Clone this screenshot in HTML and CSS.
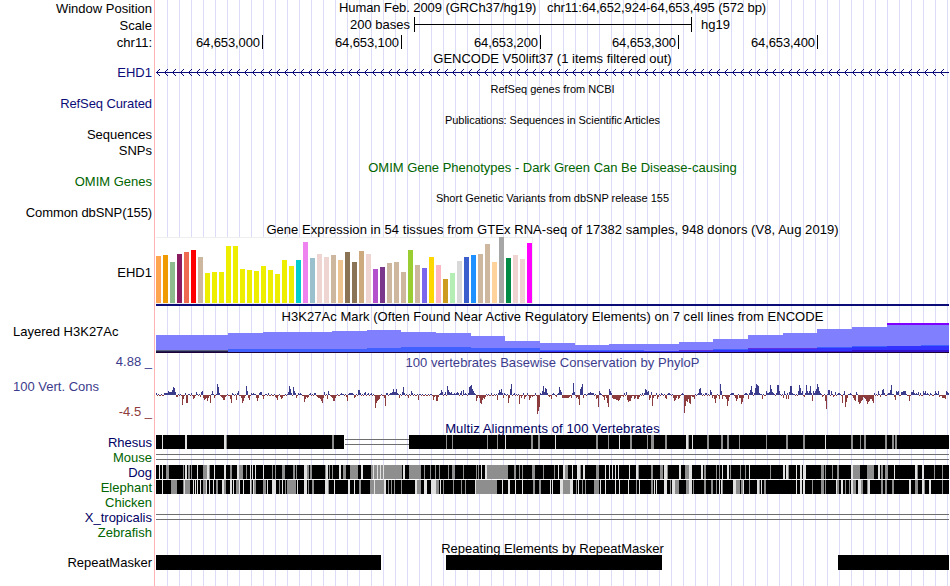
FILE: index.html
```
<!DOCTYPE html>
<html lang="en">
<head>
  <meta charset="UTF-8" />
  <title>chr11:64,652,924-64,653,495</title>
  <link rel="stylesheet" href="styles.css">
</head>
<body>
  <div class="browser">
    <div class="labels">
      <div class="label h17">Window Position</div>
      <div class="label h17">Scale</div>
      <div class="label h30">chr11:</div>
      <div class="label blue h31">EHD1</div>
      <div class="label blue tight h31">RefSeq Curated</div>
      <div class="label h16">Sequences</div>
      <div class="label h31">SNPs</div>
      <div class="label green h31">OMIM Genes</div>
      <div class="label tight dbsnp">Common dbSNP(155)</div>
      <div class="label gtex-label">EHD1</div>
      <div class="label left h3k-label">Layered H3K27Ac</div>
      <div class="label cons h25">4.88 _</div>
      <div class="label cons left h25">100 Vert. Cons</div>
      <div class="label neg h31">-4.5 _</div>
      <div class="label navy">Rhesus</div>
      <div class="label green">Mouse</div>
      <div class="label navy">Dog</div>
      <div class="label green">Elephant</div>
      <div class="label green">Chicken</div>
      <div class="label navy">X_tropicalis</div>
      <div class="label green h30">Zebrafish</div>
      <div class="label">RepeatMasker</div>
    </div>

    <div class="tracks">
      <div class="title position">Human Feb. 2009 (GRCh37/hg19) &nbsp; chr11:64,652,924-64,653,495 (572 bp)</div>
      <div class="scale">
        <span class="scale-text">200 bases</span>
        <span class="scale-bar"></span>
        <span>hg19</span>
      </div>
      <div class="ruler">
        <span class="first">64,653,000</span>
        <span>64,653,100</span>
        <span>64,653,200</span>
        <span class="short">64,653,300</span>
        <span>64,653,400</span>
      </div>
      <div class="title gencode">GENCODE V50lift37 (1 items filtered out)</div>
      <svg class="gene" id="gene" width="793" height="17"></svg>
      <div class="title small refseq">RefSeq genes from NCBI</div>
      <div class="title small pubs">Publications: Sequences in Scientific Articles</div>
      <div class="title green omim">OMIM Gene Phenotypes - Dark Green Can Be Disease-causing</div>
      <div class="title small dbsnp-title">Short Genetic Variants from dbSNP release 155</div>
      <div class="title gtex-title">Gene Expression in 54 tissues from GTEx RNA-seq of 17382 samples, 948 donors (V8, Aug 2019)</div>
      <div class="gtex">
        <div class="gtex-bars" id="gtex"></div>
      </div>
      <div class="title h3k-title">H3K27Ac Mark (Often Found Near Active Regulatory Elements) on 7 cell lines from ENCODE</div>
      <svg id="h3k" width="793" height="30"></svg>
      <div class="title cons cons-title">100 vertebrates Basewise Conservation by PhyloP</div>
      <svg id="phylop" width="793" height="51"></svg>
      <div class="title navy multiz-title">Multiz Alignments of 100 Vertebrates</div>
      <svg id="multiz" width="793" height="105"></svg>
      <div class="title rmsk-title">Repeating Elements by RepeatMasker</div>
      <div class="rmsk">
        <span class="rep-a"></span>
        <span class="rep-b"></span>
        <span class="rep-c"></span>
      </div>
    </div>
  </div>
  <script src="script.js"></script>
</body>
</html>
```
FILE: styles.css
```
body {
  margin: 0;
  background: #fff;
  font-family: "Liberation Sans", Arial, Helvetica, sans-serif;
  font-size: 13px;
  line-height: 15px;
  color: #000;
  overflow: hidden;
}

.browser {
  display: flex;
  width: 949px;
  height: 586px;
}

.labels {
  width: 152px;
  padding: 1px 2px 0 0;
  border-right: 1px solid #ffb4b4;
  box-sizing: content-box;
  flex: none;
}

.label {
  height: 15px;
  text-align: right;
  white-space: nowrap;
}

.label.left {
  text-align: left;
  padding-left: 13px;
}

.label.tight { letter-spacing: -0.1px; }

.label.h16 { height: 16px; }
.label.h17 { height: 17px; }
.label.h25 { height: 25px; }
.label.h30 { height: 30px; }
.label.h31 { height: 31px; }
.label.dbsnp { height: 60px; }
.label.gtex-label { height: 59px; }
.label.h3k-label { height: 30px; }

.blue { color: #0c0c78; }
.navy { color: #000064; }
.green { color: #006400; }
.cons { color: #3c3c8c; }
.neg { color: #8c3c3c; }

.tracks {
  width: 793px;
  margin-left: 1px;
  flex: none;
  background: repeating-linear-gradient(to right, transparent 0 11px, #dcdcf8 11px 12px);
}

.tracks svg {
  display: block;
  shape-rendering: crispEdges;
}

.title {
  text-align: center;
  white-space: nowrap;
}

.small { font-size: 11px; }

.position {
  height: 17px;
  letter-spacing: -0.07px;
}

.scale {
  display: flex;
  height: 18px;
}

.scale-text {
  width: 254px;
  margin-right: 4px;
  text-align: right;
}

.scale-bar {
  width: 276px;
  height: 15px;
  margin-right: 9px;
  border-left: 1px solid #000;
  border-right: 1px solid #000;
  background: linear-gradient(#000, #000) 0 7px / 100% 1px no-repeat;
}

.ruler {
  display: flex;
  height: 16px;
}

.ruler span {
  box-sizing: border-box;
  width: 139px;
  height: 14px;
  padding-right: 2px;
  border-right: 1px solid #000;
  text-align: right;
  letter-spacing: -0.1px;
}

.ruler .first { width: 107px; }
.ruler .short { width: 138px; }

.gencode { height: 14px; }
.refseq { height: 31px; }
.pubs { height: 47px; letter-spacing: -0.06px; }
.omim { height: 31px; }
.dbsnp-title { height: 31px; }
.gtex-title { height: 15px; letter-spacing: 0.055px; }

.gtex {
  height: 67px;
  margin-bottom: 3px;
  border-bottom: 2px solid #0c0c78;
}

.gtex-bars {
  display: flex;
  align-items: flex-end;
  gap: 2px;
  box-sizing: border-box;
  width: 377px;
  height: 67px;
  background: #fff;
  border: solid #eee;
  border-width: 1px 1px 1px 0;
}

.gtex-bars span {
  width: 5px;
  flex: none;
}

.h3k-title { height: 14px; letter-spacing: 0.05px; }
.cons-title { height: 15px; padding-top: 2px; letter-spacing: 0.04px; }
.multiz-title { height: 14px; letter-spacing: 0.1px; }
.rmsk-title { height: 14px; padding-top: 1px; }

.rmsk {
  display: flex;
  height: 15px;
}

.rmsk span { background: #000; }
.rep-a { width: 225px; }
.rep-b { width: 216px; margin-left: 65px; }
.rep-c { width: 111px; margin-left: 176px; }
```
FILE: script.js
```
const NS = "http://www.w3.org/2000/svg";

function rect(svg, x, y, w, h, fill) {
  const r = document.createElementNS(NS, "rect");
  r.setAttribute("x", x);
  r.setAttribute("y", y);
  r.setAttribute("width", w);
  r.setAttribute("height", h);
  r.setAttribute("fill", fill);
  svg.appendChild(r);
}

// gene intron line, arrows point to the reverse strand
const gene = document.getElementById("gene");
rect(gene, 0, 7, 793, 1, "#0c0c78");
for (let x = 1; x < 790; x += 8) {
  for (let i = 1; i <= 3; i++) {
    rect(gene, x + i - 1, 7 - i, 1, 1, "#0c0c78");
    rect(gene, x + i - 1, 7 + i, 1, 1, "#0c0c78");
  }
}

// GTEx tissues: height, color
const tissues = `47 ffa54f,48 ee9a00,41 8fbc8f,49 8b1c62,51 ee6a50,53 ff0000,46 cdb79e,
30 eeee00,31 eeee00,31 eeee00,57 eeee00,57 eeee00,34 eeee00,33 eeee00,32 eeee00,37 eeee00,
33 eeee00,29 eeee00,43 eeee00,37 eeee00,43 00cdcd,61 ee82ee,45 9ac0cd,49 eed5d2,46 eed5d2,
48 cdb79e,43 eec591,51 8b7355,41 8b7355,52 cdaa7d,49 eed5d2,34 b452cd,36 7a378b,40 cdb79e,
41 cdb79e,31 cdb79e,53 9acd32,38 cdb79e,35 7a67ee,46 ffd700,38 ffb6c1,24 cd9b1d,30 b4eeb4,
42 d9d9d9,46 3a5fcd,48 1e90ff,49 cdb79e,59 cdb79e,41 ffd39b,66 a6a6a6,45 008b45,48 eed5d2,
44 eed5d2,60 ff00ff`;
const gtex = document.getElementById("gtex");
tissues.split(",").forEach(t => {
  const [h, color] = t.trim().split(" ");
  const bar = document.createElement("span");
  bar.style.height = h + "px";
  bar.style.background = "#" + color;
  gtex.appendChild(bar);
});

// H3K27Ac layers: [start, top] steps, each running to the next start
const h3k = document.getElementById("h3k");
function steps(list, fill, bottom) {
  list.forEach(([x, y], i) => {
    const end = i + 1 < list.length ? list[i + 1][0] : 793;
    if (y < bottom) rect(h3k, x, y, end - x, bottom - y, fill);
  });
}
steps([[0, 12], [72, 10], [107, 9], [176, 8], [211, 7], [245, 9], [280, 10], [315, 13], [349, 18],
  [384, 20], [419, 22], [453, 21], [523, 19], [557, 16], [592, 12], [627, 10], [661, 6], [696, 4],
  [731, 0]], "#8080ff", 29);
rect(h3k, 731, 0, 62, 2, "#8000ff");
steps([[0, 27], [72, 26], [211, 25], [245, 24], [315, 25], [384, 27], [488, 28], [557, 26],
  [592, 25], [661, 24], [696, 23], [765, 22]], "#4060ff", 29);
rect(h3k, 0, 27, 72, 1, "#606080");
rect(h3k, 523, 27, 34, 1, "#6030e0");
rect(h3k, 592, 25, 69, 1, "#6030e0");
steps([[384, 28], [557, 27], [592, 26], [661, 25], [696, 24], [731, 23]], "#3333ff", 29);
steps([[592, 28], [661, 28], [696, 27]], "#3314cc", 29);
rect(h3k, 0, 28, 72, 1, "#202050");
rect(h3k, 0, 29, 793, 1, "#1c0038");

// PhyloP scores, position:height
const scores = `0:2 8:2 9:2 10:2 11:2 12:4 13:3 14:3 15:3 16:5 17:8 18:7 19:3 20:-2 21:-2 26:-10
27:-4 29:2 30:-8 31:-8 35:2 37:-4 38:-3 40:3 44:-2 45:3 46:4 47:-3 48:-5 49:-4 50:-3 51:-6 52:-3
54:-8 56:4 58:-3 61:11 62:8 63:2 65:-2 66:-3 67:-5 68:-5 69:-2 74:-4 75:-8 76:2 80:-5 81:2 82:4
85:-3 86:-8 87:-6 88:-3 90:9 91:4 92:-3 93:-5 95:2 97:2 100:-3 101:-6 102:-3 103:2 104:3 105:3
107:-4 112:2 119:-2 120:-3 121:-5 124:-2 125:-4 126:-3 132:3 133:9 134:6 135:2 137:8 138:4 139:2
140:-3 142:2 144:2 148:-7 149:-4 150:-2 151:-3 152:-2 154:2 158:2 159:2 161:-2 162:-3 163:-3
164:-4 165:-6 166:-8 167:-3 168:3 171:-4 172:4 175:-2 176:-3 177:-6 178:-6 179:-3 185:2 190:-2
191:-6 193:2 194:2 195:2 196:2 198:-3 199:-2 202:5 203:5 204:2 208:2 209:3 212:2 215:2 219:-13
220:-8 221:-6 222:-5 223:-4 228:-3 229:-11 230:2 231:2 234:2 235:2 236:3 237:6 238:3 239:3 240:6
241:2 243:-3 246:3 247:8 248:2 252:-3 255:4 256:2 262:-5 277:-5 278:-2 280:-6 281:-6 282:-2 284:2
285:5 286:3 289:3 291:9 292:5 293:3 294:2 295:3 298:2 300:2 301:3 302:2 304:2 305:4 307:5 309:2
312:2 313:8 314:9 315:10 316:6 317:4 318:2 320:-6 321:-3 323:-3 324:-8 325:-9 326:-5 327:-3
328:-4 329:-2 335:2 341:-5 342:2 343:5 344:3 345:6 346:2 347:-3 348:2 352:-8 353:-3 354:6 355:11
358:2 363:-9 365:-3 367:2 368:-4 369:-2 371:2 373:-5 374:-3 376:-2 379:2 381:-19 382:-16 383:-12
384:2 386:4 387:9 388:3 389:7 390:6 391:2 393:-2 395:-4 397:2 400:-2 402:2 403:8 404:5 405:3
406:-3 407:-3 408:-3 409:-3 410:-3 411:-3 412:-3 413:-2 415:-3 416:2 417:12 418:3 420:-3 421:-2
422:-4 423:-10 424:6 425:8 426:11 427:-3 432:2 433:2 434:3 435:2 436:2 437:2 440:-4 441:-3
442:-12 443:4 444:2 447:-2 448:-5 450:-3 451:-8 452:-12 453:6 454:4 455:2 456:-3 457:-4 458:-4
459:-4 460:-5 461:-5 462:-6 463:-5 464:-3 467:-2 468:2 470:3 471:-5 472:-7 473:-6 474:-6 475:-3
478:-4 479:-3 481:-4 482:-4 483:-2 486:2 488:2 489:6 490:5 491:3 492:4 493:-5 494:-3 495:3
496:-11 497:-3 500:2 501:-4 502:-2 505:2 509:-3 510:-4 512:2 513:2 517:-3 518:-6 519:-5 520:-3
522:-4 523:-3 526:2 528:-18 529:-11 530:-6 531:-7 532:-4 533:-8 534:-9 536:-2 537:-2 538:-4
542:2 543:6 544:7 545:2 549:2 550:2 554:5 555:3 556:-3 558:-4 559:-8 560:-3 563:-4 564:11 565:4
566:-4 569:-2 570:-4 571:-11 572:-6 573:-2 575:2 576:2 577:2 579:-3 580:-6 581:-4 583:-3 584:-3
585:-9 586:-7 587:-3 589:2 590:2 592:-4 593:2 594:5 595:9 596:3 598:2 599:7 600:11 601:10 602:9
603:2 606:-4 610:4 611:2 612:2 613:3 614:10 615:6 616:3 617:2 620:2 621:10 622:10 623:4 627:-3
628:4 630:-4 631:2 632:-4 633:3 634:9 635:9 636:2 642:4 643:10 644:7 645:2 646:4 648:-2 649:2
650:10 651:4 652:2 653:4 654:9 655:2 656:-6 657:4 658:2 659:4 660:6 661:11 662:8 663:4 664:2
666:-2 669:-6 670:-14 672:5 673:5 675:4 677:-2 679:3 682:2 683:2 686:-8 688:4 689:-12 690:-7
691:-3 694:2 697:-3 698:-5 699:-6 700:3 702:-7 703:-9 704:-8 705:-6 706:-5 707:-2 708:-3 709:-4
710:-6 711:-9 712:-7 713:-6 714:-4 715:-4 716:-6 717:-8 718:2 722:4 724:-2 726:5 727:6 728:2
732:2 733:2 734:5 735:10 738:-2 739:-5 740:4 741:3 742:4 745:3 746:3 747:4 748:4 749:4 753:-6
755:3 756:3 757:5 758:2 760:2 762:3 764:2 767:4 768:2 769:4 771:2 774:2 779:4 780:2 782:4 783:-2
786:-3 787:-3 788:-3 789:-4 790:4 791:3 792:2`;
const phylop = document.getElementById("phylop");
const zero = 25;
const values = Array.from({ length: 793 }, (_, x) => (x * 7) % 11 < 5 ? 1 : -1);
scores.split(/\s+/).forEach(s => {
  const [x, v] = s.split(":").map(Number);
  values[x] = v;
});
values.forEach((v, x) => {
  if (v > 0) rect(phylop, x, zero - v, 1, v, "#3c3c8c");
  else rect(phylop, x, zero, 1, -v, "#8c3c3c");
});

// multiz rows: g = gray, l = light, position:width
const rhesus = `l6 l29:2 l68:2 g70 g176:2 g290 g296 g331 g341 l349 g375:2 g382:2 l399 g440:2 g452
l463 g474:2 g491 g495:3 g509:2 l530:2 g532 l536 g551:2 g565:2 g571:2 g583 g610 g630:2 g647:2 l669
g695:2 g704 g708:2 g729:2 g736:2 g739:2`;
const dog = `l3 l6 g10:3 g27 l29:2 g32:2 g35 l41 g47:4 l51:2 g53 l58 l68:2 g74:2 l81:2 g83:4 g90
l94 l96 l99 l107 g116 g119 g126:3 g137:2 g140 l148:3 g151:2 g154:2 g169 l170:2 g173 g176 l183:2
g187:3 g194:8 l205:2 g215:31 l217 l221 l224 l227 l247:2 g253:12 g268 g274 g279 g283 g292 g296:3
g307 g320 g322 l325 l329:2 g331:21 g358:2 g363 g366 g376:3 g387 g398 l402 l407:2 g409:3 l416
l421:3 g424 l427:2 g440:3 l449 l453 l456 l459 l462 l473 l480:2 g482 g495:2 g504:3 l508:3 g511
l523:2 g529:4 l533:3 l545:2 g548:2 g560 g563 l566 l571:2 g574 g584 g589 l593 g614 l627:2 l630:2
g632 l640 l644:2 l647:3 g665:3 g669 g676 g681:2 l695:2 g697:7 g711:7 l722:2 g725:2 g729:3 l738
l759:2 g761 l766:2 g778 g786`;
const elephant = `l6 g15:6 g27 l28 g29:5 l37 l39 l41 l44 g47:3 l50 l53 l57 g60:2 l66:2 g68:2
l74:2 l77 g80:3 l83 l87 l94 g95 l97 g98:2 g107:3 l111 l116:4 g123 l126 g129 g131:9 l141 l148:3
g152 g156:2 l169:3 g172 l178 l192:2 l198 g203:2 g214:14 l218 l228:2 g232 g235 g238 g245 l259:2
g261:4 l268:3 l275:5 g280:3 l284 g287 g297 g305 g309 l319 g320:21 l346 l352:2 l359 l366 g377:2
g383:2 l394 l396 l404:3 g407:7 l414:3 g420 l422 g426 g429 g438:5 l444 l449 l459 l463 l472 g480
l483 g495:2 l498 l500 l508:3 g514 l516:3 g519:4 g530:3 l533:3 g537 g548:2 g555:2 g560 l563 l565
g566 l577:3 g580:4 g585:2 l587 g593 l601:2 g603 l605 g608:2 l640 l644:2 l647:2 g656 g665:3 g669
l680 g681:2 l685:2 g689 g693 l695:2 g697:3 l702:3 g705:2 g711 l712:2 g725:2 g729:2 g736:2 l753:2
g759:3 l766:2 g768 l773:2 g786`;
const multiz = document.getElementById("multiz");
const shades = { g: "#8e8e8e", l: "#e1e1e1" };
function marks(list, y) {
  list.split(/\s+/).forEach(m => {
    const [x, w] = m.slice(1).split(":").map(Number);
    rect(multiz, x, y, w || 1, 14, shades[m[0]]);
  });
}
function gap(x, w, y) {
  rect(multiz, x, y + 4, w, 1, "#6e6e6e");
  rect(multiz, x, y + 9, w, 1, "#6e6e6e");
}
rect(multiz, 0, 0, 188, 14, "#000");
gap(189, 64, 0);
rect(multiz, 253, 0, 540, 14, "#000");
marks(rhesus, 0);
gap(0, 793, 15);
rect(multiz, 0, 30, 793, 14, "#000");
marks(dog, 30);
rect(multiz, 0, 45, 793, 14, "#000");
marks(elephant, 45);
gap(0, 793, 75);
```
